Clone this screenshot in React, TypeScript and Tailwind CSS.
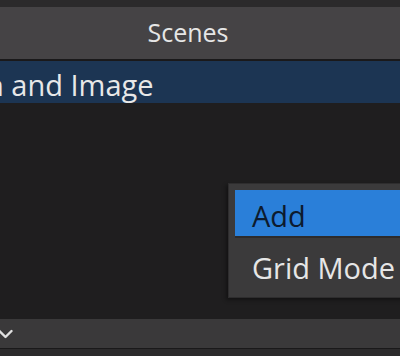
import React from "react";

export default function App() {
  return (
    <div
      className="w-[400px] h-[356px] overflow-hidden flex flex-col bg-[#1f1e1f] relative"
      style={{ fontFamily: '"Open Sans", "Noto Sans", sans-serif' }}
    >
      <div className="h-[7px] bg-[#2b2a2b] shrink-0" />
      <div className="h-[52px] bg-[#454345] shrink-0 flex items-center justify-center">
        <span className="text-[25px] text-[#e6e6e6] ml-[-24px]">Scenes</span>
      </div>
      <div className="h-[2px] bg-[#1a191a] shrink-0" />
      <div className="h-[42px] bg-[#1c3553] shrink-0 flex items-center overflow-hidden">
        <span className="text-[29px] leading-none text-[#e8e8e8] whitespace-nowrap ml-[-14px] mt-[4px]">
          n and Image
        </span>
      </div>
      <div className="flex-1 bg-[#1f1e1f]" />
      <div className="h-[29px] bg-[#3a393a] shrink-0 flex items-center">
        <svg width="16" height="12" viewBox="0 0 16 12" className="ml-[-2px]">
          <path d="M1.5 3 L7.5 9 L13.5 3" stroke="#e0e0e0" strokeWidth="2.4" fill="none" strokeLinecap="round" strokeLinejoin="round" />
        </svg>
      </div>
      <div className="h-[1px] bg-[#1a191a] shrink-0" />
      <div className="h-[7px] bg-[#2b2a2b] shrink-0" />

      <div className="absolute left-[228px] top-[183px] w-[190px] h-[115px] bg-[#3b3a3b] border border-[#2e2d2e] shadow-[-2px_2px_4px_rgba(0,0,0,0.4)] pt-[6px] pl-[6px] flex flex-col">
        <div className="h-[46px] bg-[#2a7fd9] flex items-center pl-[17px]">
          <span className="text-[29px] leading-none text-[#0d1b2e] mt-[4px]">Add</span>
        </div>
        <div className="h-[2px] bg-[#2c2b2c]" />
        <div className="h-[52px] flex items-center pl-[17px]">
          <span className="text-[29px] leading-none text-[#e6e6e6] whitespace-nowrap mt-[6px]">Grid Mode</span>
        </div>
      </div>
    </div>
  );
}
